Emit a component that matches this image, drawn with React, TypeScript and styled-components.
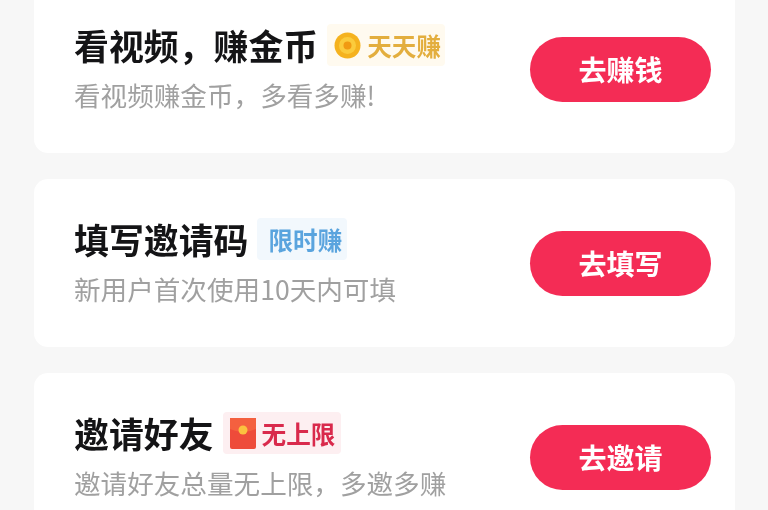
import React from 'react';
import styled, { createGlobalStyle } from 'styled-components';

const GlobalStyle = createGlobalStyle`
  * {
    box-sizing: border-box;
    margin: 0;
  }

  html, body {
    height: 100%;
    background: #f7f7f7;
    overflow: hidden;
  }

  body {
    font-family: "Noto Sans CJK SC", "Liberation Sans", sans-serif;
  }
`;

const Page = styled.div`
  height: 510px;
  overflow: hidden;
  background: #f7f7f7;
  filter: blur(0.5px);
`;

const List = styled.div`
  display: flex;
  flex-direction: column;
  gap: 26px;
  margin: -15px 33px 0 34px;
`;

const Card = styled.div`
  display: flex;
  align-items: center;
  justify-content: space-between;
  height: 168px;
  padding: 0 24px 0 40px;
  background: #fff;
  border-radius: 14px;
`;

const Info = styled.div`
  display: flex;
  flex-direction: column;
  gap: 6px;
  margin-top: -2px;
`;

const TitleRow = styled.div`
  display: flex;
  align-items: center;
  gap: 9px;
  height: 48px;
`;

const Title = styled.h2`
  font-size: 34.9px;
  line-height: 48px;
  font-weight: 700;
  color: #141416;
  white-space: nowrap;
`;

const tagColors = {
  gold: { bg: '#fffaef', fg: '#e3ae3e', left: 7, right: 4 },
  blue: { bg: '#f2f8fd', fg: '#5aa4de', left: 11, right: 5 },
  red: { bg: '#fdeff1', fg: '#d92a4c', left: 7, right: 6 },
};

type TagTone = keyof typeof tagColors;

const Tag = styled.span<{ $tone: TagTone }>`
  display: flex;
  align-items: center;
  gap: 6px;
  height: 42px;
  padding: 0 ${(p) => tagColors[p.$tone].right}px 0 ${(p) => tagColors[p.$tone].left}px;
  border-radius: 4px;
  font-size: 24.6px;
  font-weight: 700;
  white-space: nowrap;
  background: ${(p) => tagColors[p.$tone].bg};
  color: ${(p) => tagColors[p.$tone].fg};
`;

const Subtitle = styled.p`
  font-size: 26.6px;
  line-height: 40px;
  color: #a0a0a0;
  white-space: nowrap;
`;

const ActionButton = styled.button`
  flex: none;
  width: 181px;
  height: 65px;
  border: 0;
  border-radius: 33px;
  background: #f42c55;
  color: #fff;
  font-family: inherit;
  font-size: 28px;
  font-weight: 700;
`;

const CoinIcon = () => (
  <svg width="27" height="27" viewBox="0 0 27 27">
    <circle cx="13.5" cy="13.5" r="13" fill="#f5b21e" />
    <circle cx="13.5" cy="13.5" r="8.5" fill="#fbcb3c" />
    <circle cx="13.5" cy="13.5" r="4" fill="#f19a12" />
  </svg>
);

const PacketIcon = () => (
  <svg width="26" height="31" viewBox="0 0 26 31">
    <rect width="26" height="31" rx="2" fill="#ee4b3a" />
    <path d="M0 0h26v11q-13 6-26 0z" fill="#f4603f" />
    <circle cx="13" cy="12" r="4.5" fill="#fbc13f" />
  </svg>
);

export default function App() {
  return (
    <Page>
      <GlobalStyle />
      <List>
        <Card>
          <Info>
            <TitleRow>
              <Title>看视频，赚金币</Title>
              <Tag $tone="gold">
                <CoinIcon />
                天天赚
              </Tag>
            </TitleRow>
            <Subtitle>看视频赚金币，多看多赚!</Subtitle>
          </Info>
          <ActionButton>去赚钱</ActionButton>
        </Card>
        <Card>
          <Info>
            <TitleRow>
              <Title>填写邀请码</Title>
              <Tag $tone="blue">限时赚</Tag>
            </TitleRow>
            <Subtitle>新用户首次使用10天内可填</Subtitle>
          </Info>
          <ActionButton>去填写</ActionButton>
        </Card>
        <Card>
          <Info>
            <TitleRow>
              <Title>邀请好友</Title>
              <Tag $tone="red">
                <PacketIcon />
                无上限
              </Tag>
            </TitleRow>
            <Subtitle>邀请好友总量无上限，多邀多赚</Subtitle>
          </Info>
          <ActionButton>去邀请</ActionButton>
        </Card>
      </List>
    </Page>
  );
}
